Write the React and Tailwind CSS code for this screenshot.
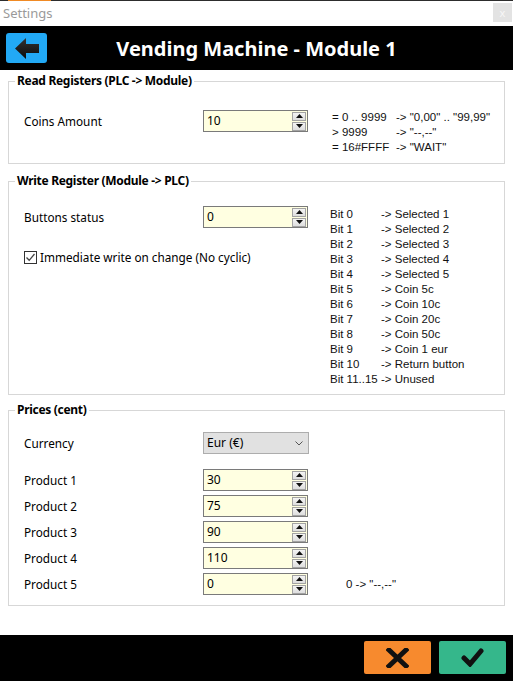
import React from "react";

function SpinBtn({ up }) {
  return (
    <div className="flex h-[9px] w-[14px] items-center justify-center border border-[#a3a3a3] bg-gradient-to-b from-[#f4f4f4] to-[#dedede]">
      <svg width="7" height="4" viewBox="0 0 7 4">
        {up ? <polygon points="0,4 7,4 3.5,0" fill="#111" /> : <polygon points="0,0 7,0 3.5,4" fill="#111" />}
      </svg>
    </div>
  );
}

function Spin({ value }) {
  return (
    <div className="flex h-[22px] w-[105px] border border-[#7a7a7a] bg-[#ffffe1]">
      <div className="flex-1 pl-[3px] text-[12px] leading-[20px] text-black">{value}</div>
      <div className="flex flex-col justify-center gap-[1px] pr-[1px]">
        <SpinBtn up />
        <SpinBtn />
      </div>
    </div>
  );
}

function Group({ title, className, children }) {
  return (
    <fieldset className={"mx-[8px] border border-[#d7d7d7] p-0 " + className}>
      <legend className="ml-[6px] px-[2px] text-[12px] font-bold leading-[14px] tracking-[-0.3px] text-black">{title}</legend>
      {children}
    </fieldset>
  );
}

const bits = [
  ["Bit 0", "-> Selected 1"],
  ["Bit 1", "-> Selected 2"],
  ["Bit 2", "-> Selected 3"],
  ["Bit 3", "-> Selected 4"],
  ["Bit 4", "-> Selected 5"],
  ["Bit 5", "-> Coin 5c"],
  ["Bit 6", "-> Coin 10c"],
  ["Bit 7", "-> Coin 20c"],
  ["Bit 8", "-> Coin 50c"],
  ["Bit 9", "-> Coin 1 eur"],
  ["Bit 10", "-> Return button"],
  ["Bit 11..15", "-> Unused"],
];

const products = [
  ["Product 1", "30"],
  ["Product 2", "75"],
  ["Product 3", "90"],
  ["Product 4", "110"],
  ["Product 5", "0"],
];

export default function App() {
  return (
    <div className="flex h-[681px] w-[513px] flex-col overflow-hidden bg-white font-['Noto_Sans',sans-serif] text-black">
      {/* top strip */}
      <div className="h-[1px] bg-[#2d2d2d]">
        <div className="ml-[8px] h-full w-[43px] bg-[#f08a24]" />
      </div>
      {/* title bar */}
      <div className="flex h-[25px] items-start justify-between bg-white">
        <div className="pl-[3px] pt-[3px] text-[13px] leading-[18px] text-[#9a9a9a]">Settings</div>
        <div className="mr-[1px] mt-[2px] flex h-[19px] w-[19px] items-center justify-center bg-[#e3e3e3] text-[11px] leading-none text-[#f7f7f7]">x</div>
      </div>
      {/* header */}
      <div className="grid h-[44px] grid-cols-[53px_1fr_53px] bg-black">
        <div className="ml-[6px] mt-[7px] flex h-[30px] w-[41px] items-center justify-center rounded-[3px] bg-[#22a9f5]">
          <svg width="41" height="30" viewBox="0 0 41 30">
            <defs>
              <linearGradient id="ag" x1="0" y1="0" x2="0" y2="1">
                <stop offset="0" stopColor="#333" />
                <stop offset="1" stopColor="#0a0a0a" />
              </linearGradient>
            </defs>
            <path d="M9 15.5 L20 5 L20 11 L33 11 L33 20 L20 20 L20 26 Z" fill="url(#ag)" />
          </svg>
        </div>
        <div className="flex items-center justify-center pt-[1px] text-[20px] font-bold leading-none text-white">
          Vending Machine - Module 1
        </div>
        <div />
      </div>

      {/* content */}
      <div className="flex-1 bg-white text-[11.75px]">
        <Group title="Read Registers (PLC -> Module)" className="mt-[4px]">
          <div className="flex items-start pb-[8px] pl-[15px] pt-[21px]">
            <div className="mt-[1px] flex h-[22px] w-[179px] items-center pt-[1px]">Coins Amount</div>
            <div className="mt-[1px]">
              <Spin value="10" />
            </div>
            <div className="ml-[24px] pt-[1px] font-['Liberation_Sans',Arial,sans-serif] text-[11.5px] leading-[15px] text-[#111]">
              <div className="flex whitespace-pre">
                <span className="w-[64px] shrink-0">= 0 .. 9999</span>
                <span>-&gt; "0,00" .. "99,99"</span>
              </div>
              <div className="flex whitespace-pre">
                <span className="w-[64px] shrink-0">&gt; 9999</span>
                <span>-&gt; "--,--"</span>
              </div>
              <div className="flex whitespace-pre">
                <span className="w-[64px] shrink-0">= 16#FFFF</span>
                <span>-&gt; "WAIT"</span>
              </div>
            </div>
          </div>
        </Group>

        <Group title="Write Register (Module -> PLC)" className="mt-[10px]">
          <div className="flex items-start pb-[7px] pl-[15px] pt-[18px]">
            <div className="flex flex-col">
              <div className="flex items-center">
                <div className="flex h-[22px] w-[179px] items-center pt-[1px]">Buttons status</div>
                <Spin value="0" />
              </div>
              <div className="mt-[21px] flex h-[16px] items-center">
                <div className="flex h-[13px] w-[13px] items-center justify-center border border-[#333] bg-white">
                  <svg width="11" height="11" viewBox="0 0 11 11">
                    <polyline points="1.5,5.5 4.2,8.3 9.5,2" fill="none" stroke="#444" strokeWidth="1.3" />
                  </svg>
                </div>
                <span className="ml-[3px] leading-[16px]">Immediate write on change (No cyclic)</span>
              </div>
            </div>
            <div className="ml-[22px] pt-[1px] font-['Liberation_Sans',Arial,sans-serif] text-[11.5px] leading-[15px] text-[#111]">
              {bits.map(([a, b]) => (
                <div key={a} className="flex whitespace-pre">
                  <span className="w-[51px] shrink-0">{a}</span>
                  <span>{b}</span>
                </div>
              ))}
            </div>
          </div>
        </Group>

        <Group title="Prices (cent)" className="mt-[8px]">
          <div className="flex flex-col pb-[10px] pl-[15px] pt-[15px]">
            <div className="flex items-center">
              <div className="flex h-[22px] w-[179px] items-center pt-[1px]">Currency</div>
              <div className="flex h-[22px] w-[106px] items-center justify-between border border-[#adadad] bg-[#e1e1e1] pl-[3px] pr-[5px]">
                <span className="text-[12px] leading-[20px]">Eur (€)</span>
                <svg width="8" height="5" viewBox="0 0 8 5">
                  <polyline points="0.5,0.5 4,4 7.5,0.5" fill="none" stroke="#555" strokeWidth="1" />
                </svg>
              </div>
            </div>
            <div className="mt-[15px] flex flex-col gap-[4px]">
              {products.map(([label, v], i) => (
                <div key={label} className="flex items-center">
                  <div className="flex h-[22px] w-[179px] items-center pt-[1px]">{label}</div>
                  <Spin value={v} />
                  {i === 4 && (
                    <span className="ml-[38px] whitespace-pre font-['Liberation_Sans',Arial,sans-serif] text-[11.5px] leading-[15px] text-[#111]">
                      0 -&gt; "--,--"
                    </span>
                  )}
                </div>
              ))}
            </div>
          </div>
        </Group>
      </div>

      {/* footer */}
      <div className="flex h-[46px] items-start justify-end gap-[8px] bg-black pr-[7px] pt-[6px]">
        <div className="flex h-[33px] w-[67px] items-center justify-center rounded-[2px] bg-[#f78a2e]">
          <svg width="23" height="20" viewBox="0 0 23 20">
            <path d="M3 2 L20 18 M20 2 L3 18" stroke="#111" strokeWidth="5" strokeLinecap="square" fill="none" />
          </svg>
        </div>
        <div className="flex h-[33px] w-[67px] items-center justify-center rounded-[2px] bg-[#35b78b]">
          <svg width="23" height="19" viewBox="0 0 23 19">
            <polyline points="3,10 9,16 20,3" stroke="#111" strokeWidth="5" strokeLinecap="round" strokeLinejoin="miter" fill="none" />
          </svg>
        </div>
      </div>
    </div>
  );
}
